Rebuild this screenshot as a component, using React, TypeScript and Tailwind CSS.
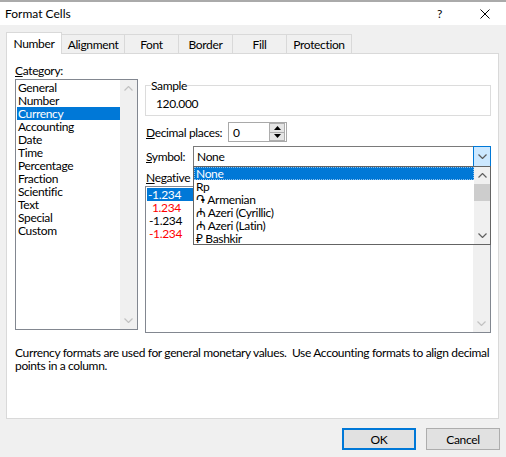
import React from "react";

function Chevron({ dir, className }: { dir: "up" | "down"; className?: string }) {
  return (
    <svg width="9" height="5" viewBox="0 0 9 5" className={className}>
      <path
        d={dir === "down" ? "M0.5 0.5 L4.5 4.5 L8.5 0.5" : "M0.5 4.5 L4.5 0.5 L8.5 4.5"}
        fill="none"
        stroke="currentColor"
        strokeWidth="1.2"
      />
    </svg>
  );
}

function Tri({ dir }: { dir: "up" | "down" }) {
  return (
    <svg width="7" height="4" viewBox="0 0 7 4">
      <path d={dir === "up" ? "M0 4 L3.5 0 L7 4 Z" : "M0 0 L3.5 4 L7 0 Z"} fill="#000" />
    </svg>
  );
}

const categories = [
  "General",
  "Number",
  "Currency",
  "Accounting",
  "Date",
  "Time",
  "Percentage",
  "Fraction",
  "Scientific",
  "Text",
  "Special",
  "Custom",
];

const symbols = ["None", "Rp", "֏ Armenian", "₼ Azeri (Cyrillic)", "₼ Azeri (Latin)", "₽ Bashkir"];

export default function App() {
  return (
    <div className="w-[506px] h-[457px] bg-[#f0f0f0] flex flex-col overflow-hidden text-[12px] leading-[13px] tracking-[-0.35px] text-black font-['Lato','Noto_Sans',sans-serif]">
      <div className="h-[2px] bg-[#aaaaaa] shrink-0" />
      {/* Title bar */}
      <div className="h-[23px] bg-white flex items-center pl-[5px] shrink-0">
        <span className="tracking-normal">Format Cells</span>
        <span className="ml-auto mr-[38px]">?</span>
        <svg width="10" height="10" viewBox="0 0 10 10" className="mr-[16px]">
          <path d="M0.5 0.5 L9.5 9.5 M9.5 0.5 L0.5 9.5" stroke="#000" strokeWidth="1" fill="none" />
        </svg>
      </div>

      {/* Tabs + panel */}
      <div className="pl-[6px] pr-[7px] pt-[7px] shrink-0">
        <div className="flex items-end h-[21px]">
          <div className="relative z-10 -mb-px h-[22px] w-[56px] bg-white border border-b-0 border-[#d9d9d9] flex items-center justify-center">
            Number
          </div>
          <div className="h-[19px] w-[63px] border-t border-r border-[#d9d9d9] flex items-center justify-center">
            Alignment
          </div>
          <div className="h-[19px] w-[54px] border-t border-r border-[#d9d9d9] flex items-center justify-center">
            Font
          </div>
          <div className="h-[19px] w-[54px] border-t border-r border-[#d9d9d9] flex items-center justify-center">
            Border
          </div>
          <div className="h-[19px] w-[54px] border-t border-r border-[#d9d9d9] flex items-center justify-center">
            Fill
          </div>
          <div className="h-[19px] w-[65px] border-t border-r border-[#d9d9d9] flex items-center justify-center">
            Protection
          </div>
        </div>

        <div className="h-[366px] bg-white border border-[#d9d9d9] flex flex-col">
          <div className="flex pt-[10px] pl-[8px]">
            {/* Category column */}
            <div className="w-[123px] flex flex-col">
              <div className="h-[13px]">
                <span className="underline underline-offset-[1px]">C</span>ategory:
              </div>
              <div className="mt-[2px] h-[251px] border border-[#828790] flex">
                <div className="flex-1 flex flex-col pt-[1px] pl-px">
                  {categories.map((c) => (
                    <div
                      key={c}
                      className={
                        c === "Currency"
                          ? "h-[13px] pl-[1px] bg-[#0078d7] text-white"
                          : "h-[13px] pl-[1px]"
                      }
                    >
                      {c}
                    </div>
                  ))}
                </div>
                <div className="w-[17px] bg-[#f0f0f0] flex flex-col items-center justify-between py-[6px] text-[#c2c2c2]">
                  <Chevron dir="up" />
                  <Chevron dir="down" />
                </div>
              </div>
            </div>

            {/* Right column */}
            <div className="ml-[7px] w-[346px] flex flex-col">
              <fieldset className="mt-[15px] border border-[#dcdcdc] px-[5px] pb-[5px]">
                <legend className="leading-[13px]">Sample</legend>
                <div className="pl-[5px] pt-[5px] h-[18px]">120.000</div>
              </fieldset>

              {/* Decimal places */}
              <div className="mt-[6px] flex items-center h-[20px]">
                <div className="w-[83px] pl-[1px]">
                  <span className="underline underline-offset-[1px]">D</span>ecimal places:
                </div>
                <div className="w-[59px] h-[20px] border border-[#a9a9a9] bg-white flex items-center">
                  <span className="pl-[4px]">0</span>
                  <div className="ml-auto mr-px h-[18px] w-[16px] flex flex-col">
                    <div className="flex-1 border border-[#adadad] bg-[#e5e5e5] flex items-center justify-center">
                      <Tri dir="up" />
                    </div>
                    <div className="flex-1 border border-t-0 border-[#adadad] bg-[#e5e5e5] flex items-center justify-center">
                      <Tri dir="down" />
                    </div>
                  </div>
                </div>
              </div>

              {/* Symbol */}
              <div className="mt-[4px] flex items-center h-[21px]">
                <div className="w-[48px] pl-[1px]">
                  <span className="underline underline-offset-[1px]">S</span>ymbol:
                </div>
                <div className="relative flex-1 h-[21px] border border-[#7a7a7a] bg-white flex items-center">
                  <span className="pl-[3px]">None</span>
                  <div className="ml-auto -mr-px self-stretch -my-px w-[18px] border border-[#0078d7] bg-[#cce8ff] flex items-center justify-center text-[#5a5a5a]">
                    <Chevron dir="down" />
                  </div>

                  {/* Dropdown list (open) */}
                  <div className="absolute z-20 top-full -left-px w-[298px] h-[79px] border border-[#646464] bg-white flex">
                    <div className="flex-1 flex flex-col overflow-hidden">
                      {symbols.map((s, i) => (
                        <div
                          key={s}
                          className={
                            i === 0
                              ? "h-[13px] shrink-0 pl-px bg-[#0078d7] text-white border border-dotted border-[#8ec0ec] leading-[11px]"
                              : "h-[13px] shrink-0 pl-[2px]"
                          }
                        >
                          {s}
                        </div>
                      ))}
                    </div>
                    <div className="w-[16px] bg-[#f0f0f0] flex flex-col items-center text-[#606060]">
                      <div className="h-[17px] flex items-center justify-center">
                        <Chevron dir="up" />
                      </div>
                      <div className="w-full h-[17px] bg-[#cdcdcd]" />
                      <div className="mt-auto h-[17px] flex items-center justify-center">
                        <Chevron dir="down" />
                      </div>
                    </div>
                  </div>
                </div>
              </div>

              {/* Negative numbers */}
              <div className="mt-[4px] h-[13px] pl-[1px]">
                <span className="underline underline-offset-[1px]">N</span>egative numbers:
              </div>
              <div className="mt-[2px] h-[147px] border border-[#828790] flex">
                <div className="flex-1 flex flex-col pt-px pl-px">
                  <div className="h-[13px] pl-px bg-[#0078d7] text-white">-1.234</div>
                  <div className="h-[13px] pl-[5px] text-[#ff0000]">1.234</div>
                  <div className="h-[13px] pl-[2px]">-1.234</div>
                  <div className="h-[13px] pl-[2px] text-[#ff0000]">-1.234</div>
                </div>
                <div className="w-[17px] bg-[#f0f0f0] flex flex-col items-center justify-end pb-[6px] text-[#c2c2c2]">
                  <Chevron dir="down" />
                </div>
              </div>
            </div>
          </div>

          <div className="mt-[13px] px-[8px] whitespace-nowrap">
            Currency formats are used for general monetary values.&nbsp; Use Accounting formats to align decimal
            <br />
            points in a column.
          </div>
        </div>
      </div>

      {/* Buttons */}
      <div className="mt-[9px] flex justify-end gap-[10px] pr-[6px] shrink-0">
        <button className="w-[74px] h-[22px] border-2 border-[#0078d7] bg-[#e1e1e1] flex items-center justify-center">
          OK
        </button>
        <button className="w-[74px] h-[22px] border border-[#adadad] bg-[#e1e1e1] flex items-center justify-center">
          Cancel
        </button>
      </div>
    </div>
  );
}
